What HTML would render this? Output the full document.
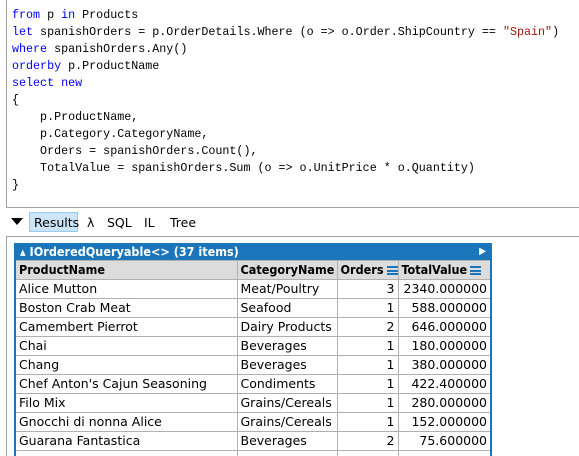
<!DOCTYPE html>
<html style="overflow:hidden;height:456px"><head><style>
body{margin:0;width:579px;height:456px;overflow:hidden;background:#fff;position:relative;font-family:"DejaVu Sans",Verdana,sans-serif}
.code{position:absolute;left:6px;top:-1px;width:573px;height:209px;border-left:1px solid #a0a0a0;border-bottom:1px solid #a0a0a0;box-sizing:border-box}
pre{margin:0;position:absolute;left:12px;top:7px;font-family:"Liberation Mono",monospace;font-size:11.7px;line-height:17px;color:#000}
.k{color:#0000ff}
.s{color:#a31515}
.tabs{position:absolute;top:213px;left:0;height:20px;font-size:12.5px}
.tabs span{position:absolute;top:2px}
.res{position:absolute;left:6px;top:236px;width:573px;height:220px;border-left:1px solid #a0a0a0;border-top:1px solid #a0a0a0;box-sizing:border-box}
.clip{position:absolute;left:0;top:0;width:579px;height:456px;overflow:hidden}
table{position:absolute;left:14px;top:243px;border-collapse:collapse;font-size:12.5px;border:2px solid #1a75bb;border-top:none;border-bottom:none;table-layout:fixed;width:476px}
td,th{border:1px solid #b0b0b0;padding:0 3px;height:18px;white-space:nowrap;line-height:18px;overflow:hidden}
th{background:#dcdcdc;text-align:left;font-weight:bold;font-family:"DejaVu Sans Condensed","DejaVu Sans",sans-serif;font-size:12.5px}
td.n{text-align:right}
.cap{background:#1a75bb;color:#fff;font-weight:bold;height:17px;line-height:17px;padding-left:4px;position:relative;border:none;font-family:"DejaVu Sans Condensed","DejaVu Sans",sans-serif}
.hb{display:inline-block;width:11px;height:9px;margin-left:3px;vertical-align:-1px;background:linear-gradient(#1a75bb 0 2px,transparent 2px 4px,#1a75bb 4px 6px,transparent 6px 7px,#1a75bb 7px 9px)}
</style></head><body>
<div class="clip">
<div class="code"></div>
<pre><span class="k">from</span> p <span class="k">in</span> Products
<span class="k">let</span> spanishOrders = p.OrderDetails.Where (o =&gt; o.Order.ShipCountry == <span class="s">"Spain"</span>)
<span class="k">where</span> spanishOrders.Any()
<span class="k">orderby</span> p.ProductName
<span class="k">select</span> <span class="k">new</span>
{
    p.ProductName,
    p.Category.CategoryName,
    Orders = spanishOrders.Count(),
    TotalValue = spanishOrders.Sum (o =&gt; o.UnitPrice * o.Quantity)
}</pre>
<div class="tabs">
<span style="left:11px;top:5px;width:0;height:0;border-left:6px solid transparent;border-right:6px solid transparent;border-top:7px solid #000"></span>
<div style="position:absolute;left:29px;top:-1px;width:49px;height:20px;background:#cce4f7;border:1px solid #99c9ef;box-sizing:border-box"></div>
<span style="left:34px">Results</span>
<span style="left:87px">λ</span>
<span style="left:107px">SQL</span>
<span style="left:144px">IL</span>
<span style="left:170px">Tree</span>
</div>
<div class="res"></div>
<table>
<colgroup><col style="width:222px"><col style="width:100px"><col style="width:61px"><col style="width:93px"></colgroup>
<tr><td colspan="4" class="cap">▴ IOrderedQueryable&lt;&gt; (37 items)<span style="position:absolute;right:4px;top:0;font-size:10px">▶</span></td></tr>
<tr><th>ProductName</th><th>CategoryName</th><th>Orders<span class="hb"></span></th><th>TotalValue<span class="hb"></span></th></tr>
<tr><td>Alice Mutton</td><td>Meat/Poultry</td><td class="n">3</td><td class="n">2340.000000</td></tr>
<tr><td>Boston Crab Meat</td><td>Seafood</td><td class="n">1</td><td class="n">588.000000</td></tr>
<tr><td>Camembert Pierrot</td><td>Dairy Products</td><td class="n">2</td><td class="n">646.000000</td></tr>
<tr><td>Chai</td><td>Beverages</td><td class="n">1</td><td class="n">180.000000</td></tr>
<tr><td>Chang</td><td>Beverages</td><td class="n">1</td><td class="n">380.000000</td></tr>
<tr><td>Chef Anton's Cajun Seasoning</td><td>Condiments</td><td class="n">1</td><td class="n">422.400000</td></tr>
<tr><td>Filo Mix</td><td>Grains/Cereals</td><td class="n">1</td><td class="n">280.000000</td></tr>
<tr><td>Gnocchi di nonna Alice</td><td>Grains/Cereals</td><td class="n">1</td><td class="n">152.000000</td></tr>
<tr><td>Guarana Fantastica</td><td>Beverages</td><td class="n">2</td><td class="n">75.600000</td></tr>
<tr><td>&nbsp;</td><td></td><td></td><td></td></tr>
</table>
</div>
</body></html>
